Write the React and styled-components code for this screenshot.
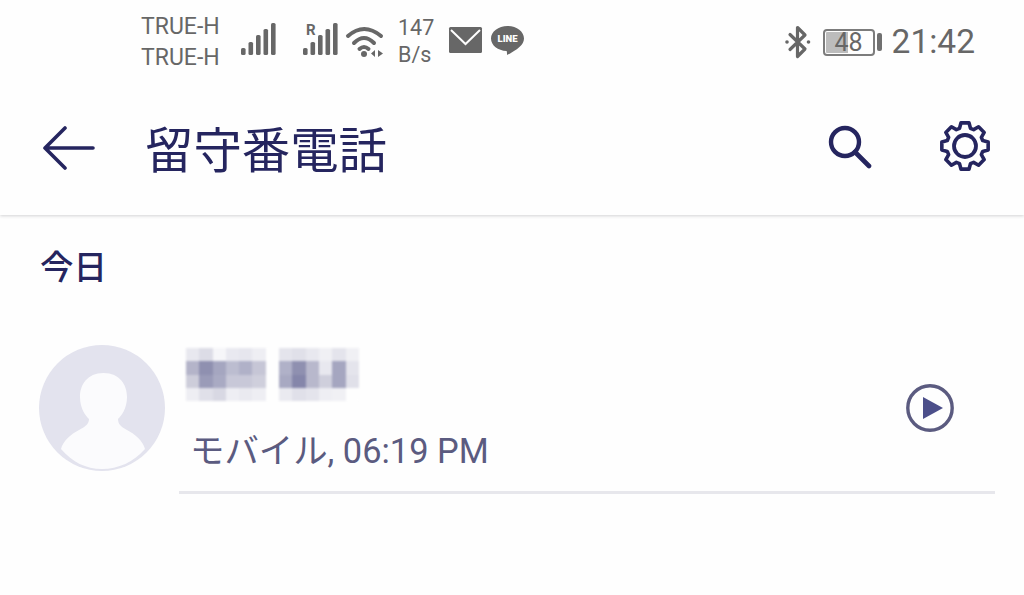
import React from "react";
import styled, { createGlobalStyle } from "styled-components";

const CJK = `Roboto, "Noto Sans CJK JP", sans-serif`;
const NAVY = "#25255f";
const GREY = "#676767";

const GlobalStyle = createGlobalStyle`
  html, body {
    margin: 0;
    padding: 0;
    background: #fefefe;
    overflow: hidden;
  }
  * { box-sizing: border-box; }
`;

const Screen = styled.div`
  width: 1024px;
  height: 595px;
  background: #fefefe;
  font-family: ${CJK};
  overflow: hidden;
`;

const StatusBar = styled.div`
  display: flex;
  align-items: center;
  height: 84px;
  padding: 0 49px 0 141px;
  color: ${GREY};
`;

const Carrier = styled.div`
  font-size: 23px;
  line-height: 31px;
  width: 78px;
  white-space: nowrap;
  margin-top: -1px;
`;

const Speed = styled.div`
  font-size: 21.5px;
  line-height: 27px;
  width: 36px;
  margin-left: 14px;
  white-space: nowrap;
  margin-top: -3px;
`;

const StatusIcon = styled.svg`
  flex: none;
  display: block;
  overflow: visible;
  margin-left: ${(p) => p.$left || 0}px;
  margin-top: ${(p) => p.$top || 0}px;
  fill: ${GREY};
`;

const StatusRight = styled.div`
  display: flex;
  align-items: center;
  margin-left: auto;
`;

const Battery = styled.div`
  width: 52px;
  height: 27px;
  margin-left: 12px;
  border: 2px solid #7c7c7c;
  border-radius: 4px;
  background: linear-gradient(to right, #bcbcbc 0 47%, transparent 47%);
  background-clip: content-box;
  padding: 1px;
  font-size: 25px;
  line-height: 21px;
  text-align: center;
  color: ${GREY};
`;

const BatteryTip = styled.div`
  width: 5px;
  height: 18px;
  margin-left: 2px;
  border-radius: 2px;
  background: #707070;
`;

const Clock = styled.div`
  font-size: 33.5px;
  margin-left: 10px;
  line-height: 40px;
`;

const AppBar = styled.header`
  display: flex;
  align-items: center;
  height: 131px;
  padding: 0 33px 0 43px;
  background: #fefefe;
  box-shadow: 0 1px 3px rgba(60, 60, 70, 0.22);
  clip-path: inset(0 0 -6px 0);
  color: ${NAVY};
`;

const Title = styled.h1`
  margin: 4px 0 0 50px;
  font-size: 48.4px;
  font-weight: 400;
  line-height: 60px;
  flex: 1;
`;

const BarIcon = styled.svg`
  display: block;
  flex: none;
  margin-left: ${(p) => p.$left || 0}px;
  margin-top: ${(p) => p.$top || 0}px;
`;

const DayLabel = styled.h2`
  margin: 32px 0 0 40px;
  font-size: 33.5px;
  line-height: 42px;
  font-weight: 500;
  color: ${NAVY};
`;

const CallRow = styled.div`
  display: flex;
  margin-top: 56px;
  padding: 0 29px 0 39px;
`;

const Avatar = styled.svg`
  display: block;
  flex: none;
  margin-right: 14px;
`;

const CallBody = styled.div`
  flex: 1;
  height: 149px;
  display: flex;
  align-items: center;
  justify-content: space-between;
  border-bottom: 3px solid #e7e7ec;
  padding-right: 41px;
`;

const CallText = styled.div`
  display: flex;
  flex-direction: column;
  align-self: flex-start;
  padding: 3px 0 0 7px;
`;

const Mosaic = styled.div`
  display: grid;
  grid-template-columns: repeat(13, 13.3px);
  grid-auto-rows: 13.3px;
  filter: blur(0.8px);
`;

const MosaicCell = styled.div`
  background: ${(p) => p.$tone};
`;

const CallMeta = styled.div`
  margin: 30px 0 0 4px;
  font-size: 34.4px;
  line-height: 40px;
  color: #5b5b80;
  white-space: nowrap;
`;

const PlayIcon = styled.svg`
  display: block;
  flex: none;
  margin-top: -21px;
`;

const MOSAIC = [
  "e8e8ef dcdce6 f6f6f9 e9e9f0 e6e6ee eeeef3 fefefe e4e4ec e0e0e9 e8e8ef f0f0f4 e4e4ec f0f0f4",
  "b4b4c9 8f90b0 a5a6c0 bcbdd0 b0b1c8 c6c6d6 fefefe b0b1c8 8f90b0 b8b8cc e8e8ef a5a6c0 e4e4ec",
  "cdcdda 9a9bb8 a9aac3 c8c8d8 c8c8d8 cfcfdc fefefe a8a9c2 8586aa b8b8cc cfcfdc a5a6c0 e0e0e9",
  "eeeef3 e0e0e9 d8d8e3 eeeef3 eaeaf0 eeeef3 fefefe eaeaf0 e0e0e9 e4e4ec eeeef3 f0f0f4 fefefe",
]
  .join(" ")
  .split(" ");

const BARS = [
  [0, 48, 7],
  [7.5, 42, 13],
  [15, 35, 20],
  [22.5, 29, 26],
  [30, 23, 32],
];

const SignalIcon = ({ left, roaming }) => (
  <StatusIcon $left={left} $top={-6} width="35" height="32" viewBox="0 23 35 32" aria-hidden="true">
    {BARS.map(([x, y, h]) => (
      <rect key={x} x={x} y={y} width="4.6" height={h} rx="1.6" />
    ))}
    {roaming && (
      <text x="3" y="35" fontFamily="Roboto, sans-serif" fontSize="15" fontWeight="700">
        R
      </text>
    )}
  </StatusIcon>
);

const WifiIcon = () => (
  <StatusIcon $left={8} $top={-2} width="38" height="33" viewBox="0 0 38 33" aria-hidden="true">
    <g fill="none" stroke={GREY} strokeWidth="4" strokeLinecap="round">
      <path d="M2 11 Q18 -3 35 11" />
      <path d="M8 18 Q18 8 28 18" />
      <path d="M13.5 24 Q18 20 22.5 24" />
    </g>
    <circle cx="18" cy="29" r="3" />
    <path d="M29 25v7l-4-3.5z M32 25v7l5-3.5z" />
  </StatusIcon>
);

const MailIcon = () => (
  <StatusIcon $left={15} $top={-4} width="33" height="26" viewBox="0 0 33 26" aria-hidden="true">
    <rect width="33" height="26" rx="1.5" />
    <path d="M2 3 L16.5 17 L31 3" fill="none" stroke="#fefefe" strokeWidth="2" />
  </StatusIcon>
);

const LineIcon = () => (
  <StatusIcon $left={9} $top={-3} width="33" height="30" viewBox="0 0 33 30" aria-hidden="true">
    <path d="M16.5 0C7.4 0 0 5.6 0 12.5S7 24.6 15.5 25c.6.4.4 2.6.6 4 2.4-1 8.7-4.6 12.6-8.2 2.6-2.3 4.3-5 4.3-8.3C33 5.6 25.6 0 16.5 0z" />
    <text
      x="16.5"
      y="16"
      textAnchor="middle"
      fontFamily="Roboto, sans-serif"
      fontSize="9.5"
      fontWeight="900"
      fill="#fefefe"
    >
      LINE
    </text>
  </StatusIcon>
);

const BluetoothIcon = () => (
  <StatusIcon width="26" height="34" viewBox="0 0 26 34" aria-hidden="true">
    <path
      d="M5 9.5 L20 24 L12.5 31.5 V2.5 L20 10 L5 24.5"
      fill="none"
      stroke={GREY}
      strokeWidth="3.2"
      strokeLinejoin="round"
      strokeLinecap="round"
    />
    <circle cx="2" cy="17" r="1.8" />
    <circle cx="23.5" cy="17" r="1.8" />
  </StatusIcon>
);

// eight toothed outline, computed so that the teeth stay even
const gearPath = () => {
  const cx = 26;
  const cy = 26;
  const pts = [];
  for (let i = 0; i < 8; i++) {
    const a = (i * Math.PI) / 4 - Math.PI / 2;
    [
      [-0.3, 18.5],
      [-0.17, 23.5],
      [0.17, 23.5],
      [0.3, 18.5],
    ].forEach(([da, r]) => {
      pts.push(`${(cx + r * Math.cos(a + da)).toFixed(2)} ${(cy + r * Math.sin(a + da)).toFixed(2)}`);
    });
  }
  return `M${pts.join(" L")} Z`;
};

const AvatarImage = () => (
  <Avatar width="126" height="126" viewBox="0 0 126 126" aria-hidden="true">
    <circle cx="63" cy="63" r="63" fill="#e3e3ee" />
    <path
      d="M64.5 28 C48 28 41 40 41 52 C41 64 47 71 50 74 C50 79 46 82 40 85 C32 89 24 96 22 104 C33 117 47 124 63 124 C79 124 95 117 106 104 C104 96 96 89 88 85 C82 82 79 79 79 74 C82 71 88 64 88 52 C88 40 81 28 64.5 28 Z"
      fill="#fbfbfd"
    />
  </Avatar>
);

const App = () => {
  return (
    <Screen>
      <GlobalStyle />
      <StatusBar>
        <Carrier>
          TRUE-H
          <br />
          TRUE-H
        </Carrier>
        <SignalIcon left={22} />
        <SignalIcon left={27} roaming />
        <WifiIcon />
        <Speed>
          147
          <br />
          B/s
        </Speed>
        <MailIcon />
        <LineIcon />
        <StatusRight>
          <BluetoothIcon />
          <Battery>48</Battery>
          <BatteryTip />
          <Clock>21:42</Clock>
        </StatusRight>
      </StatusBar>

      <AppBar>
        <BarIcon $top={-4} width="52" height="44" viewBox="0 0 52 44" aria-hidden="true">
          <path
            d="M50 22 H3 M22 2 L2 22 L22 42"
            fill="none"
            stroke={NAVY}
            strokeWidth="3.6"
            strokeLinecap="round"
            strokeLinejoin="round"
          />
        </BarIcon>
        <Title>留守番電話</Title>
        <BarIcon $top={-6} width="44" height="44" viewBox="0 0 44 44" aria-hidden="true">
          <circle cx="17" cy="17" r="14" fill="none" stroke={NAVY} strokeWidth="4.4" />
          <path d="M27 27 L41 41" stroke={NAVY} strokeWidth="4.6" strokeLinecap="round" />
        </BarIcon>
        <BarIcon $left={67} $top={-7} width="52" height="52" viewBox="0 0 52 52" aria-hidden="true">
          <path d={gearPath()} fill="none" stroke={NAVY} strokeWidth="3.6" strokeLinejoin="round" />
          <circle cx="26" cy="26" r="11" fill="none" stroke={NAVY} strokeWidth="3.8" />
        </BarIcon>
      </AppBar>

      <DayLabel>今日</DayLabel>

      <CallRow>
        <AvatarImage />
        <CallBody>
          <CallText>
            <Mosaic aria-hidden="true">
              {MOSAIC.map((tone, i) => (
                <MosaicCell key={i} $tone={`#${tone}`} />
              ))}
            </Mosaic>
            <CallMeta>モバイル, 06:19 PM</CallMeta>
          </CallText>
          <PlayIcon width="48" height="48" viewBox="0 0 48 48" aria-hidden="true">
            <circle cx="24" cy="24" r="22.2" fill="none" stroke="#5b5b80" strokeWidth="3.4" />
            <path d="M17 13 L37 24 L17 35 Z" fill="#4c4f8a" />
          </PlayIcon>
        </CallBody>
      </CallRow>
    </Screen>
  );
};

export default App;
